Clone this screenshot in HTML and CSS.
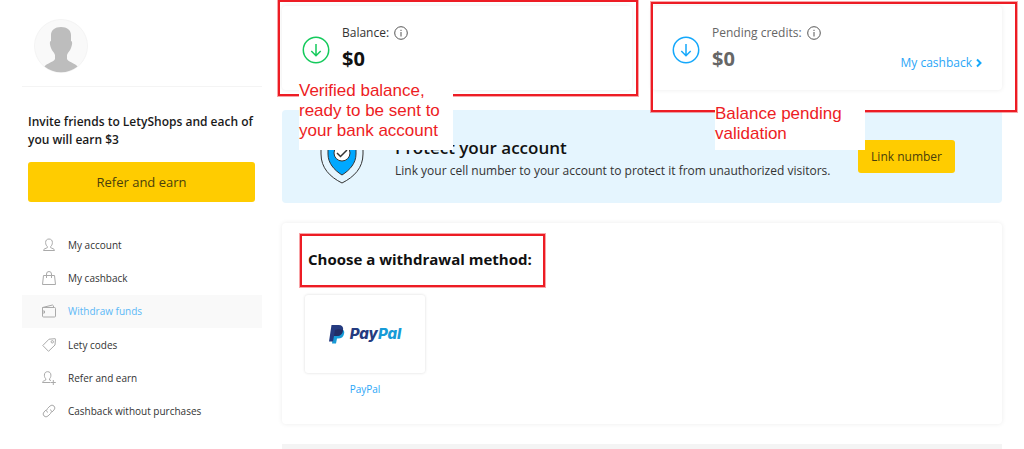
FILE: index.html
```html
<!DOCTYPE html>
<html lang="en">
<head>
    <meta charset="UTF-8">
    <meta name="viewport" content="width=device-width, initial-scale=1.0">
    <title>Withdraw funds - LetyShops</title>
    <link rel="stylesheet" href="styles.css">
</head>
<body>
    <div class="page">
        <aside class="sidebar">
            <div class="profile">
                <svg class="avatar" viewBox="0 0 54 54" role="img" aria-label="User avatar">
                    <circle cx="27" cy="27" r="26.5" fill="#f9f9f9" stroke="#f4f4f4"/>
                    <path d="M27 8c-6 0-10 3-10 8v6c-1.500 0-1.500 3 0 7 1 3 3 4 4 7v4c-1 3-8 4-10.500 7.500a26.500 26.500 0 0 0 33 0C41 44 34 43 33 40v-4c1-3 3-4 4-7 1.500-4 1.500-7 0-7v-6c0-5-4-8-10-8z" fill="#bdbdbd"/>
                </svg>
            </div>

            <div class="invite">
                <p class="invite-text">Invite friends to LetyShops and each of you will earn $3</p>
                <button class="btn btn-large" type="button">Refer and earn</button>
            </div>

            <nav class="menu">
                <a href="#" class="menu-item">
                    <svg class="menu-icon" viewBox="0 0 14 14">
                        <path d="M7 1C4.800 1 3.600 2.400 3.600 4.500c0 2 .8 3.200 1.700 4v1.200C4 10.500 1.500 10.600 1.500 12.500h11c0-1.900-2.500-2-3.800-2.800V8.500c.9-.8 1.700-2 1.700-4C10.400 2.400 9.200 1 7 1z"/>
                    </svg>
                    My account
                </a>
                <a href="#" class="menu-item">
                    <svg class="menu-icon" viewBox="0 0 14 14">
                        <path d="M1.500 4.500h11l1 9H.5zM4.500 7V3a2.500 2.500 0 0 1 5 0v4"/>
                    </svg>
                    My cashback
                </a>
                <a href="#" class="menu-item active">
                    <svg class="menu-icon" viewBox="0 0 14 14">
                        <path d="M.5 3.500h12q1 0 1 1v7.500q0 1-1 1h-11q-1 0-1-1zM.5 3.500L10.500 1q1 0 1.200 2.500M.5 7h2v2h-2"/>
                    </svg>
                    Withdraw funds
                </a>
                <a href="#" class="menu-item">
                    <svg class="menu-icon" viewBox="0 0 14 14">
                        <path d="M.8 7.500L7 1.200l6-.5q.5 0 .5.500L13 7l-6.500 6.300z"/>
                        <circle cx="10.300" cy="3.800" r="1.200"/>
                    </svg>
                    Lety codes
                </a>
                <a href="#" class="menu-item">
                    <svg class="menu-icon" viewBox="0 0 14 14">
                        <path d="M8.500 11.500h-8c0-1.500 2-1.700 3.300-2.500V7.800C3 7 2.400 6 2.400 4.200 2.400 2 3.500.7 5.600.7S8.900 2 8.900 4.200C8.900 6 8.300 7 7.500 7.800V9l1.500.5M11.300 9v5M8.800 11.500h5"/>
                    </svg>
                    Refer and earn
                </a>
                <a href="#" class="menu-item">
                    <svg class="menu-icon" viewBox="0 0 14 14">
                        <path d="M5.500 8.500a2.800 2.800 0 0 1 0-4L8 2a2.900 2.900 0 0 1 4 0 2.900 2.900 0 0 1 0 4L9.800 8.200M8.500 5.500a2.800 2.800 0 0 1 0 4L6 12a2.900 2.900 0 0 1-4 0 2.900 2.900 0 0 1 0-4l2.200-2.200"/>
                    </svg>
                    Cashback without purchases
                </a>
            </nav>
        </aside>

        <main class="content">
            <div class="balances">
                <section class="card balance marked marked-verified">
                    <svg class="balance-icon green" viewBox="0 0 28 28">
                        <circle cx="14" cy="14" r="12.700"/>
                        <path d="M14 8v11.500M9.300 15l4.700 4.700 4.700-4.700"/>
                    </svg>
                    <div class="balance-info">
                        <p class="balance-label">
                            Balance:
                            <svg class="info-icon" viewBox="0 0 14 14">
                                <circle cx="7" cy="7" r="6.300"/>
                                <path d="M7 6v4.500M7 3.800v1.200"/>
                            </svg>
                        </p>
                        <p class="balance-value">$0</p>
                    </div>
                    <p class="note note-verified">Verified balance, ready to be sent to your bank account</p>
                </section>

                <section class="card balance pending marked marked-pending">
                    <svg class="balance-icon blue" viewBox="0 0 28 28">
                        <circle cx="14" cy="14" r="12.700"/>
                        <path d="M14 8v11.500M9.300 15l4.700 4.700 4.700-4.700"/>
                    </svg>
                    <div class="balance-info">
                        <p class="balance-label">
                            Pending credits:
                            <svg class="info-icon" viewBox="0 0 14 14">
                                <circle cx="7" cy="7" r="6.300"/>
                                <path d="M7 6v4.500M7 3.800v1.200"/>
                            </svg>
                        </p>
                        <p class="balance-value">$0</p>
                    </div>
                    <a href="#" class="cashback-link">
                        My cashback
                        <svg class="chevron" viewBox="0 0 6 10"><path d="M1 1.500L4.500 5 1 8.500"/></svg>
                    </a>
                    <p class="note note-pending">Balance pending validation</p>
                </section>
            </div>

            <section class="protect">
                <svg class="shield" viewBox="0 0 44 54">
                    <path d="M22 1C16 6 9 8 1 8v16c0 14 9 23 21 29 12-6 21-15 21-29V8C35 8 28 6 22 1z" fill="#e5f5fe" stroke="#333"/>
                    <path d="M22 9c-4 3-9 5-14 5v10c0 9 6 16 14 21 8-5 14-12 14-21V14c-5 0-10-2-14-5z" fill="#00a8ff" stroke="#333"/>
                    <circle cx="22" cy="23" r="8" fill="#fff" stroke="#333"/>
                    <path d="M17 23l3.500 3.500L27 20" fill="none" stroke="#333" stroke-width="1.500"/>
                </svg>
                <div class="protect-info">
                    <h2>Protect your account</h2>
                    <p>Link your cell number to your account to protect it from unauthorized visitors.</p>
                </div>
                <button class="btn" type="button">Link number</button>
            </section>

            <section class="card withdrawal">
                <h2 class="withdrawal-title">Choose a withdrawal method:</h2>
                <a href="#" class="method">
                    <span class="method-logo">
                        <svg class="paypal-mark" viewBox="0 0 16 20">
                            <path d="M5 5h8q3 1.500 2 5-1 4.500-6 4.500H8L7 19.500H3z" fill="#179bd7"/>
                            <path d="M2.500 1h7q5.500 0 4.500 5.500Q13 12 7.500 12H5l-1 5.500H0z" fill="#253b80"/>
                            <path d="M6 6q4-1.500 8 0-.8 6-6.500 6H5z" fill="#222d65"/>
                        </svg>
                        <span class="paypal-word">Pay<span>Pal</span></span>
                    </span>
                    <span class="method-name">PayPal</span>
                </a>
            </section>

            <div class="next-block"></div>
        </main>
    </div>
</body>
</html>
```
FILE: styles.css
```css
* {
    margin: 0;
    padding: 0;
    box-sizing: border-box;
}

body {
    background: #fff;
    color: #333;
    font-family: 'Open Sans', sans-serif;
    font-size: 12px;
    line-height: 18px;
}

a {
    color: #2ba6f7;
    text-decoration: none;
}

.page {
    display: grid;
    grid-template-columns: 240px minmax(0, 1fr);
    gap: 20px;
    padding: 0 22px;
}

.btn {
    height: 33px;
    padding: 0 13px;
    border: none;
    border-radius: 3px;
    background: #fc0;
    color: #4a3f0c;
    font-family: inherit;
    font-size: 12px;
    cursor: pointer;
}

.btn-large {
    width: 100%;
    height: 40px;
    font-size: 13px;
}

/* Sidebar */

.profile {
    padding: 19px 12px 13px;
    border-bottom: 1px solid #f4f4f4;
}

.avatar {
    display: block;
    width: 54px;
    height: 54px;
}

.invite {
    padding: 26px 7px 26px 6px;
}

.invite-text {
    margin: 0 -7px 13px 0;
    color: #1a1a1a;
    font-size: 12px;
    font-weight: 600;
}

.menu {
    display: grid;
    grid-auto-rows: 1fr;
    min-height: 200px;
}

.menu-item {
    display: flex;
    align-items: center;
    gap: 12px;
    padding: 0 20px;
    color: #333;
    font-size: 10px;
}

.menu-item.active {
    background: #f9f9f9;
    color: #5bb8f7;
}

.menu-icon {
    width: 14px;
    height: 14px;
    fill: none;
    stroke: #aaa;
    overflow: visible;
}

/* Balance cards */

.content {
    padding-top: 6px;
}

.card {
    border-radius: 4px;
    background: #fff;
    box-shadow: 0 0 5px rgba(0, 0, 0, 0.08);
}

.balances {
    display: grid;
    grid-template-columns: 1fr 1fr;
    gap: 20px;
    margin-bottom: 20px;
}

.balance {
    display: flex;
    align-items: center;
    gap: 12px;
    height: 84px;
    padding: 4px 20px 0;
}

.balance-icon {
    width: 28px;
    height: 28px;
    fill: none;
    stroke-width: 1.5;
}

.green {
    stroke: #14ca5c;
}

.blue {
    stroke: #14a8fb;
}

.balance-label {
    display: flex;
    align-items: center;
    gap: 5px;
}

.balance-value {
    color: #111;
    font-size: 20px;
    font-weight: 700;
    line-height: 34px;
}

.info-icon {
    width: 14px;
    height: 14px;
    fill: none;
    stroke: #555;
}

.pending .balance-label,
.pending .balance-value {
    color: #666;
}

.cashback-link {
    display: flex;
    align-items: center;
    gap: 4px;
    margin: 26px 0 0 auto;
}

.chevron {
    width: 6px;
    height: 10px;
    fill: none;
    stroke: #14a8fb;
    stroke-width: 2;
}

/* Red frames and notes laid over the page */

.marked {
    position: relative;
}

.marked::after,
.withdrawal-title::after {
    content: '';
    position: absolute;
    border: 2px solid #ed1c24;
    box-shadow: 0 0 0 1px rgba(237, 28, 36, 0.4);
    pointer-events: none;
}

.marked-verified::after {
    inset: -6px -6px -6px -4px;
}

.marked-pending::after {
    inset: -4px -15px -22px -1px;
}

.note {
    position: absolute;
    z-index: 1;
    background: #fff;
    color: #ed1c24;
    font-family: 'Liberation Sans', sans-serif;
    font-size: 17px;
    line-height: 20px;
}

.note-verified {
    top: 75px;
    left: 17px;
    width: 154px;
    height: 69px;
}

.note-pending {
    top: 98px;
    left: 63px;
    width: 150px;
    height: 46px;
}

/* Protect banner */

.protect {
    display: flex;
    align-items: center;
    height: 93px;
    margin-bottom: 20px;
    padding: 0 47px 0 38px;
    border-radius: 4px;
    background: #e5f5fe;
}

.shield {
    width: 44px;
    height: 54px;
}

.protect-info {
    flex: 1;
    margin-left: 31px;
}

.protect-info h2 {
    color: #111;
    font-size: 17px;
    font-weight: 600;
    line-height: 28px;
}

/* Withdrawal */

.withdrawal {
    height: 201px;
    padding: 24px 23px;
}

.withdrawal-title {
    position: relative;
    width: fit-content;
    margin-bottom: 23px;
    padding-left: 3px;
    color: #111;
    font-size: 15px;
    line-height: 25px;
}

.withdrawal-title::after {
    inset: -13px -13px -15px -5px;
}

.method {
    display: inline-flex;
    flex-direction: column;
    align-items: center;
    gap: 7px;
    font-size: 10px;
}

.method-logo {
    display: flex;
    align-items: center;
    justify-content: center;
    gap: 5px;
    width: 120px;
    height: 78px;
    border-radius: 3px;
    box-shadow: 0 0 3px rgba(0, 0, 0, 0.15);
}

.paypal-mark {
    width: 16px;
    height: 20px;
}

.paypal-word {
    color: #253b80;
    font-family: Inter, sans-serif;
    font-size: 15px;
    font-style: italic;
    font-weight: 800;
}

.paypal-word span {
    color: #179bd7;
}

.next-block {
    height: 5px;
    margin-top: 20px;
    background: #f4f4f4;
}
```
